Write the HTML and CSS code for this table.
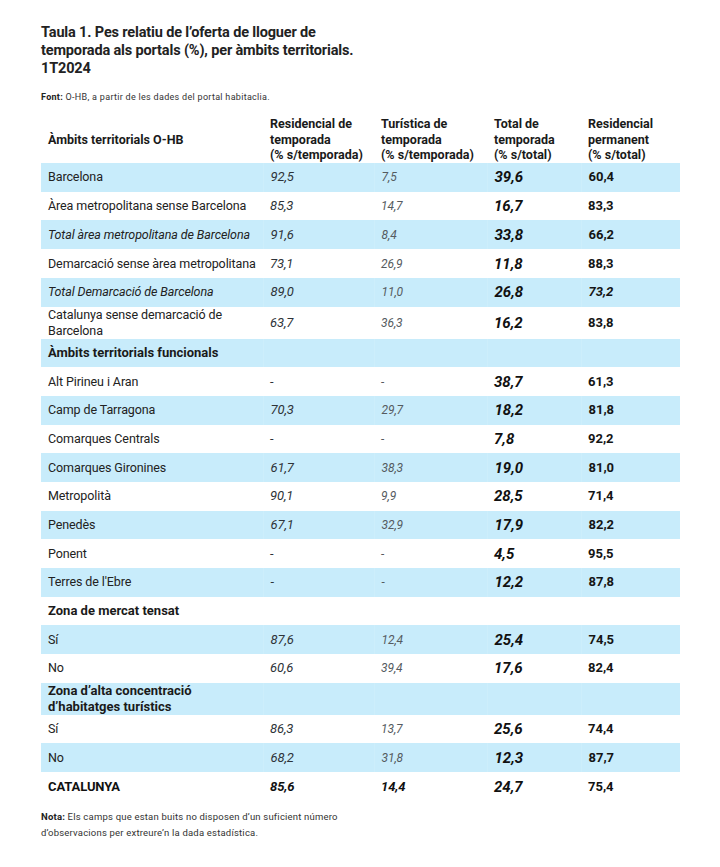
FILE: index.html
```html
<!DOCTYPE html>
<html lang="ca">

<head>
    <meta charset="UTF-8">
    <meta name="viewport" content="width=device-width, initial-scale=1.0">
    <title>Taula 1. Oferta de lloguer de temporada</title>
    <link rel="stylesheet" href="styles.css">
</head>

<body>
    <div class="page">
        <h1 class="title">Taula 1. Pes relatiu de l’oferta de lloguer de<br>temporada als portals (%), per àmbits territorials.<br>1T2024</h1>
        <p class="source"><b>Font:</b> O-HB, a partir de les dades del portal habitaclia.</p>

        <table class="data">
            <colgroup>
                <col class="c1"><col class="c2"><col class="c3"><col class="c4"><col class="c5">
            </colgroup>
            <thead>
                <tr>
                    <th class="first">Àmbits territorials O-HB</th>
                    <th>Residencial de<br>temporada<br>(% s/temporada)</th>
                    <th>Turística de<br>temporada<br>(% s/temporada)</th>
                    <th>Total de<br>temporada<br>(% s/total)</th>
                    <th>Residencial<br>permanent<br>(% s/total)</th>
                </tr>
            </thead>
            <tbody>
                <tr class="blue"><td>Barcelona</td><td class="res">92,5</td><td class="tur">7,5</td><td class="tot">39,6</td><td class="perm">60,4</td></tr>
                <tr><td>Àrea metropolitana sense Barcelona</td><td class="res">85,3</td><td class="tur">14,7</td><td class="tot">16,7</td><td class="perm">83,3</td></tr>
                <tr class="blue"><td class="it">Total àrea metropolitana de Barcelona</td><td class="res">91,6</td><td class="tur">8,4</td><td class="tot">33,8</td><td class="perm">66,2</td></tr>
                <tr><td>Demarcació sense àrea metropolitana</td><td class="res">73,1</td><td class="tur">26,9</td><td class="tot">11,8</td><td class="perm">88,3</td></tr>
                <tr class="blue"><td class="it">Total Demarcació de Barcelona</td><td class="res">89,0</td><td class="tur">11,0</td><td class="tot">26,8</td><td class="perm pit">73,2</td></tr>
                <tr><td>Catalunya sense demarcació de<br>Barcelona</td><td class="res">63,7</td><td class="tur">36,3</td><td class="tot">16,2</td><td class="perm">83,8</td></tr>
                <tr class="blue group"><td>Àmbits territorials funcionals</td><td></td><td></td><td></td><td></td></tr>
                <tr><td>Alt Pirineu i Aran</td><td class="res">-</td><td class="tur">-</td><td class="tot">38,7</td><td class="perm">61,3</td></tr>
                <tr class="blue"><td>Camp de Tarragona</td><td class="res">70,3</td><td class="tur">29,7</td><td class="tot">18,2</td><td class="perm">81,8</td></tr>
                <tr><td>Comarques Centrals</td><td class="res">-</td><td class="tur">-</td><td class="tot">7,8</td><td class="perm">92,2</td></tr>
                <tr class="blue"><td>Comarques Gironines</td><td class="res">61,7</td><td class="tur">38,3</td><td class="tot">19,0</td><td class="perm">81,0</td></tr>
                <tr><td>Metropolità</td><td class="res">90,1</td><td class="tur">9,9</td><td class="tot">28,5</td><td class="perm">71,4</td></tr>
                <tr class="blue"><td>Penedès</td><td class="res">67,1</td><td class="tur">32,9</td><td class="tot">17,9</td><td class="perm">82,2</td></tr>
                <tr><td>Ponent</td><td class="res">-</td><td class="tur">-</td><td class="tot">4,5</td><td class="perm">95,5</td></tr>
                <tr class="blue"><td>Terres de l'Ebre</td><td class="res">-</td><td class="tur">-</td><td class="tot">12,2</td><td class="perm">87,8</td></tr>
                <tr class="group"><td>Zona de mercat tensat</td><td></td><td></td><td></td><td></td></tr>
                <tr class="blue"><td>Sí</td><td class="res">87,6</td><td class="tur">12,4</td><td class="tot">25,4</td><td class="perm">74,5</td></tr>
                <tr><td>No</td><td class="res">60,6</td><td class="tur">39,4</td><td class="tot">17,6</td><td class="perm">82,4</td></tr>
                <tr class="blue group"><td>Zona d’alta concentració<br>d’habitatges turístics</td><td></td><td></td><td></td><td></td></tr>
                <tr><td>Sí</td><td class="res">86,3</td><td class="tur">13,7</td><td class="tot">25,6</td><td class="perm">74,4</td></tr>
                <tr class="blue"><td>No</td><td class="res">68,2</td><td class="tur">31,8</td><td class="tot">12,3</td><td class="perm">87,7</td></tr>
                <tr class="total"><td>CATALUNYA</td><td class="res">85,6</td><td class="tur">14,4</td><td class="tot">24,7</td><td class="perm">75,4</td></tr>
            </tbody>
        </table>

        <p class="note"><b>Nota:</b> Els camps que estan buits no disposen d’un suficient número<br>d’observacions per extreure’n la dada estadística.</p>
    </div>
</body>

</html>
```

FILE: styles.css
```css
* {
  margin: 0;
  padding: 0;
  box-sizing: border-box;
}

body {
  background: #fff;
  color: #1c1c1c;
  font-family: Roboto, "Liberation Sans", Arial, sans-serif;
}

.page {
  width: 720px;
  padding: 24px 40px 0 41px;
}

.title {
  font-size: 14.5px;
  line-height: 18px;
  font-weight: 700;
  color: #222;
  letter-spacing: -0.15px;
  white-space: nowrap;
}

.source {
  margin-top: 13px;
  font-size: 9px;
  line-height: 12px;
  color: #333;
  letter-spacing: 0.3px;
}

.source b,
.note b {
  font-weight: 700;
  color: #222;
}

/* table */
.data {
  margin-top: 13px;
  width: 639px;
  border-collapse: collapse;
  table-layout: fixed;
  font-size: 12.5px;
  letter-spacing: -0.1px;
}

.data .c1 { width: 222px; }
.data .c2 { width: 111px; }
.data .c3 { width: 113px; }
.data .c4 { width: 94px; }
.data .c5 { width: 99px; }

.data th {
  text-align: left;
  vertical-align: bottom;
  font-size: 12.5px;
  line-height: 15.7px;
  font-weight: 700;
  color: #1a1a1a;
  letter-spacing: 0;
  white-space: nowrap;
  padding: 0 0 0 7px;
}

.data th.first {
  vertical-align: middle;
}

.data td {
  height: 28.7px;
  padding: 0 4px 0 7px;
  line-height: 16px;
  vertical-align: middle;
  color: #222;
  white-space: nowrap;
}

.data tr.blue td {
  background: #c8ecfb;
}

.data tr.blue td + td {
  border-left: 1px solid #cdeefb;
}

.data td.it {
  font-style: italic;
}

.data td.res {
  font-style: italic;
  color: #2e3338;
  font-size: 13px;
}

.data td.tur {
  font-style: italic;
  color: #555b60;
  font-size: 12px;
}

.data td.tot {
  font-style: italic;
  font-weight: 700;
  font-size: 15px;
  color: #111;
  letter-spacing: 0;
}

.data td.perm {
  font-weight: 700;
  font-size: 13px;
  color: #151515;
  letter-spacing: 0;
}

.data td.pit {
  font-style: italic;
}

.data tr.group td {
  font-weight: 700;
  font-size: 13px;
  color: #1a1a1a;
  letter-spacing: 0;
}

.data tr.total td {
  font-weight: 700;
  font-size: 13px;
  color: #111;
}

.data tr.total td.res,
.data tr.total td.tur {
  color: #111;
  font-size: 13px;
}

.data tr.total td.tot {
  font-size: 15px;
}

.note {
  margin-top: 8px;
  font-size: 9.5px;
  line-height: 16px;
  color: #333;
  letter-spacing: 0.2px;
}
```
